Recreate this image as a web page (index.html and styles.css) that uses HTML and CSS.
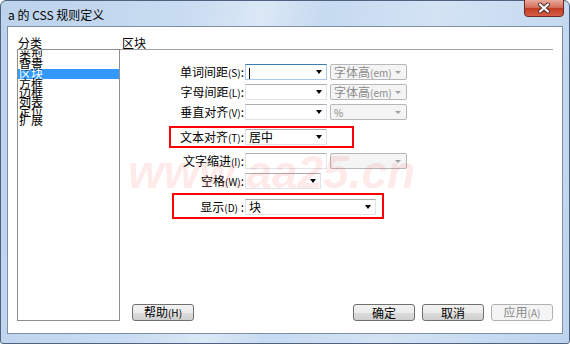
FILE: index.html
```html
<!DOCTYPE html>
<html lang="zh-CN">
<head>
    <meta charset="UTF-8">
    <title>a 的 CSS 规则定义</title>
    <link rel="stylesheet" href="styles.css">
</head>
<body>
    <div class="window">
        <div class="titlebar">
            <span class="title">a 的 CSS 规则定义</span>
            <div class="close">
                <svg width="40" height="17" viewBox="0 0 40 17">
                    <defs>
                        <linearGradient id="red" x1="0" y1="0" x2="0" y2="1">
                            <stop offset="0" stop-color="#e9a99b"/>
                            <stop offset="0.45" stop-color="#d4705e"/>
                            <stop offset="0.5" stop-color="#c23a22"/>
                            <stop offset="1" stop-color="#d9604a"/>
                        </linearGradient>
                    </defs>
                    <path d="M0.5 0 V13 Q0.5 16.5 4 16.5 H36 Q39.5 16.5 39.5 13 V0" fill="url(#red)" stroke="#6b2a20"/>
                    <path d="M16 4.5 L24 11.5 M24 4.5 L16 11.5" stroke="#4a2a2a" stroke-width="4" stroke-linecap="round"/>
                    <path d="M16 4.5 L24 11.5 M24 4.5 L16 11.5" stroke="#fff" stroke-width="2.2" stroke-linecap="round"/>
                </svg>
            </div>
        </div>

        <div class="client">
            <div class="side">
                <div class="side-label">分类</div>
                <ul class="cat-list">
                    <li>类型</li>
                    <li>背景</li>
                    <li class="selected">区块</li>
                    <li>方框</li>
                    <li>边框</li>
                    <li>列表</li>
                    <li>定位</li>
                    <li>扩展</li>
                </ul>
            </div>

            <div class="main">
                <div class="section-title">区块</div>

                <div class="form">
                    <div class="row">
                        <label>单词间距<span class="key">(S)</span>:</label>
                        <div class="combo focus"><span class="val"><span class="caret"></span></span><span class="arrow"></span></div>
                        <div class="unit"><span class="val">字体高<span class="key">(em)</span></span><span class="arrow"></span></div>
                    </div>
                    <div class="row">
                        <label>字母间距<span class="key">(L)</span>:</label>
                        <div class="combo"><span class="val"></span><span class="arrow"></span></div>
                        <div class="unit"><span class="val">字体高<span class="key">(em)</span></span><span class="arrow"></span></div>
                    </div>
                    <div class="row">
                        <label>垂直对齐<span class="key">(V)</span>:</label>
                        <div class="combo"><span class="val"></span><span class="arrow"></span></div>
                        <div class="unit"><span class="val"><span class="key">%</span></span><span class="arrow"></span></div>
                    </div>
                    <div class="row mark mark-align">
                        <label>文本对齐<span class="key">(T)</span>:</label>
                        <div class="combo"><span class="val">居中</span><span class="arrow"></span></div>
                    </div>
                    <div class="row">
                        <label>文字缩进<span class="key">(I)</span>:</label>
                        <div class="combo"><span class="val"></span></div>
                        <div class="unit"><span class="val"></span><span class="arrow"></span></div>
                    </div>
                    <div class="row">
                        <label>空格<span class="key">(W)</span>:</label>
                        <div class="combo short"><span class="val"></span><span class="arrow"></span></div>
                    </div>
                    <div class="row mark mark-display">
                        <label>显示<span class="key">(D)</span> :</label>
                        <div class="combo wide"><span class="val">块</span><span class="arrow"></span></div>
                    </div>
                </div>

                <div class="buttons">
                    <button class="btn">帮助<span class="key">(H)</span></button>
                    <div class="spacer"></div>
                    <button class="btn">确定</button>
                    <button class="btn">取消</button>
                    <button class="btn" disabled>应用<span class="key">(A)</span></button>
                </div>
            </div>

            <div class="watermark">www.aa25.cn</div>
        </div>
    </div>
</body>
</html>
```

FILE: styles.css
```css
/* Global */
body {
    margin: 0;
    padding: 0;
    font-family: "Noto Sans CJK SC", "Noto Sans", sans-serif;
    font-size: 12px;
    color: #000;
    background: #fff;
}

* {
    box-sizing: border-box;
}

/* Window frame */
.window {
    width: 570px;
    height: 344px;
    display: flex;
    flex-direction: column;
    border: 1px solid #4f6380;
    border-radius: 6px 6px 3px 3px;
    background: linear-gradient(100deg, #bcd3ec 0%, #c9dcf1 30%, #dbe8f6 42%, #c6daf0 52%, #d3e3f4 70%, #bdd4ed 100%);
    padding: 0 6px 9px 6px;
}

.titlebar {
    height: 25px;
    display: flex;
    align-items: center;
    position: relative;
}

.title {
    padding-left: 1px;
    font-size: 12px;
    line-height: 14px;
    margin-top: 2px;
}

.close {
    position: absolute;
    right: -1px;
    top: -1px;
    height: 17px;
}

.close svg {
    display: block;
}

/* Client area */
.client {
    flex: 1;
    display: flex;
    background: #fff;
    border: 1px solid #7f8ea4;
    position: relative;
    overflow: hidden;
}

.side {
    width: 112px;
    padding: 9px 0 12px 9px;
    display: flex;
    flex-direction: column;
}

.side-label {
    line-height: 13px;
    padding-left: 1px;
}

.cat-list {
    list-style: none;
    margin: 0;
    padding: 1px 0 0 0;
    flex: 1;
    border: 1px solid #8e8f8f;
    font-size: 12px;
    line-height: 9px;
}

.cat-list li {
    height: 9px;
    padding-left: 1px;
    white-space: nowrap;
}

.cat-list li.selected {
    background: #3399ff;
    color: #fff;
    height: 10px;
}

/* Main panel */
.main {
    flex: 1;
    display: flex;
    flex-direction: column;
    padding: 9px 9px 12px 0;
}

.section-title {
    line-height: 13px;
    padding-left: 2px;
    border-bottom: 1px solid #a0a0a0;
}

.form {
    padding-top: 14px;
}

.row {
    display: flex;
    align-items: center;
    height: 16px;
    margin: 0 0 4px 55px;
}

.row label {
    width: 69px;
    text-align: right;
    white-space: nowrap;
    line-height: 16px;
}

.key {
    font-size: 10px;
}

.combo {
    width: 82px;
    height: 16px;
    margin-left: 1px;
    display: flex;
    align-items: center;
    padding: 0 4px 0 3px;
    border: 1px solid #e2e3ea;
    border-top-color: #abadb3;
    background: #fff;
}

.combo.focus {
    border-color: #a9c9e6;
    border-top-color: #3d7bad;
}

.combo.short {
    width: 76px;
}

.combo.wide {
    width: 131px;
}

.val {
    flex: 1;
    line-height: 14px;
    white-space: nowrap;
}

.caret {
    display: inline-block;
    width: 1px;
    height: 11px;
    background: #000;
    vertical-align: middle;
}

.arrow {
    width: 0;
    height: 0;
    border-left: 3.5px solid transparent;
    border-right: 3.5px solid transparent;
    border-top: 4px solid #000;
}

.unit {
    width: 77px;
    height: 16px;
    margin-left: 3px;
    display: flex;
    align-items: center;
    padding: 0 5px 0 3px;
    border: 1px solid #b5b8bb;
    border-radius: 2px;
    background: #f4f4f4;
    color: #8a8a8a;
}

.unit .arrow {
    border-left-width: 3px;
    border-right-width: 3px;
    border-top: 3px solid #a0a0a0;
}

/* Highlighted rows */
.mark {
    border: 2px solid #ff0000;
    height: auto;
    align-items: flex-start;
}

.mark-align {
    margin: 6px 0 5px 49px;
    width: 185px;
    padding: 1px 0 0 4px;
}

.mark-display {
    margin: 0 0 0 52px;
    width: 212px;
    padding: 4px 0 1px 1px;
}

/* Buttons */
.buttons {
    margin-top: auto;
    display: flex;
    gap: 7px;
    padding-left: 12px;
}

.spacer {
    flex: 1;
}

.btn {
    width: 62px;
    height: 17px;
    padding: 0;
    font-family: inherit;
    font-size: 12px;
    line-height: 14px;
    color: #000;
    border: 1px solid #707070;
    border-radius: 3px;
    background: linear-gradient(#f2f2f2 0%, #ebebeb 50%, #dddddd 51%, #cfcfcf 100%);
}

.btn:disabled {
    color: #8a8a8a;
    border-color: #adb2b5;
    background: #f4f4f4;
}

/* Watermark */
.watermark {
    position: absolute;
    left: 120px;
    top: 118px;
    font-family: "Liberation Sans", Arial, sans-serif;
    font-style: italic;
    font-weight: bold;
    font-size: 46px;
    color: rgba(255, 40, 40, 0.1);
    pointer-events: none;
    white-space: nowrap;
}
```
